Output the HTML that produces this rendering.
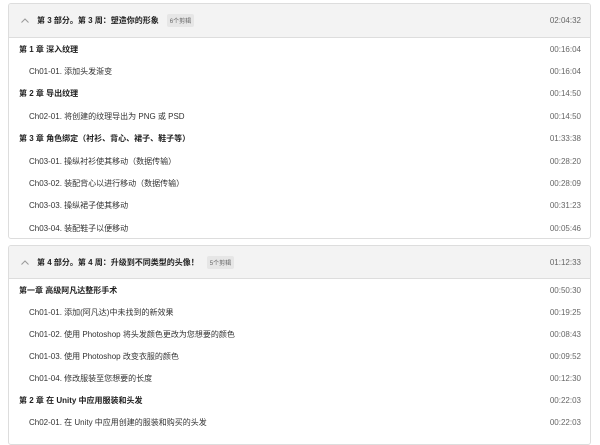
<!DOCTYPE html>
<html><head><meta charset="utf-8"><style>
*{margin:0;padding:0;box-sizing:border-box}
body{width:600px;height:436px;background:#fff;font-family:"Liberation Sans","Noto Sans CJK SC",sans-serif;font-size:8px;color:#222;overflow:hidden;position:relative}
.box{position:absolute;left:8px;width:583px;border:1px solid #ddd;border-radius:3px;background:#fff;overflow:hidden}
.hd{height:34px;background:#f3f3f3;border-bottom:1px solid #ddd;display:flex;align-items:center;padding:0 9px 0 12px;font-weight:bold}
.hd svg{margin-right:8px}
.tag{background:#e6e6e6;color:#666;font-weight:normal;font-size:6px;padding:2px 3px;margin-left:8px;border-radius:2px}
.hd .t{margin-left:auto;font-weight:normal;color:#666}
.r{height:22.4px;display:flex;align-items:center;padding:0 9px 0 10px}
.r .t{margin-left:auto;color:#666;font-weight:normal}
.r.c{font-weight:bold}
.r.i{padding-left:20px;color:#333}
</style></head><body>
<div class="box" style="top:3px;height:236px">
<div class="hd"><svg width="8" height="5" viewBox="0 0 8 5"><path d="M0.5 4.5L4 1L7.5 4.5" fill="none" stroke="#999" stroke-width="1"/></svg>第 3 部分。第 3 周：塑造你的形象<span class="tag">6个剪辑</span><span class="t">02:04:32</span></div>
<div class="r c">第 1 章 深入纹理<span class="t">00:16:04</span></div>
<div class="r i">Ch01-01. 添加头发渐变<span class="t">00:16:04</span></div>
<div class="r c">第 2 章 导出纹理<span class="t">00:14:50</span></div>
<div class="r i">Ch02-01. 将创建的纹理导出为 PNG 或 PSD<span class="t">00:14:50</span></div>
<div class="r c">第 3 章 角色绑定（衬衫、背心、裙子、鞋子等）<span class="t">01:33:38</span></div>
<div class="r i">Ch03-01. 操纵衬衫使其移动（数据传输）<span class="t">00:28:20</span></div>
<div class="r i">Ch03-02. 装配背心以进行移动（数据传输）<span class="t">00:28:09</span></div>
<div class="r i">Ch03-03. 操纵裙子使其移动<span class="t">00:31:23</span></div>
<div class="r i">Ch03-04. 装配鞋子以便移动<span class="t">00:05:46</span></div>
</div>
<div class="box" style="top:245px;height:200px">
<div class="hd" style="height:33px"><svg width="8" height="5" viewBox="0 0 8 5"><path d="M0.5 4.5L4 1L7.5 4.5" fill="none" stroke="#999" stroke-width="1"/></svg>第 4 部分。第 4 周：升级到不同类型的头像！<span class="tag">5个剪辑</span><span class="t">01:12:33</span></div>
<div class="r c" style="height:22px">第一章 高级阿凡达整形手术<span class="t">00:50:30</span></div>
<div class="r i" style="height:22px">Ch01-01. 添加(阿凡达)中未找到的新效果<span class="t">00:19:25</span></div>
<div class="r i" style="height:22px">Ch01-02. 使用 Photoshop 将头发颜色更改为您想要的颜色<span class="t">00:08:43</span></div>
<div class="r i" style="height:22px">Ch01-03. 使用 Photoshop 改变衣服的颜色<span class="t">00:09:52</span></div>
<div class="r i" style="height:22px">Ch01-04. 修改服装至您想要的长度<span class="t">00:12:30</span></div>
<div class="r c" style="height:22px">第 2 章 在 Unity 中应用服装和头发<span class="t">00:22:03</span></div>
<div class="r i" style="height:22px">Ch02-01. 在 Unity 中应用创建的服装和购买的头发<span class="t">00:22:03</span></div>
</div>
</body></html>
